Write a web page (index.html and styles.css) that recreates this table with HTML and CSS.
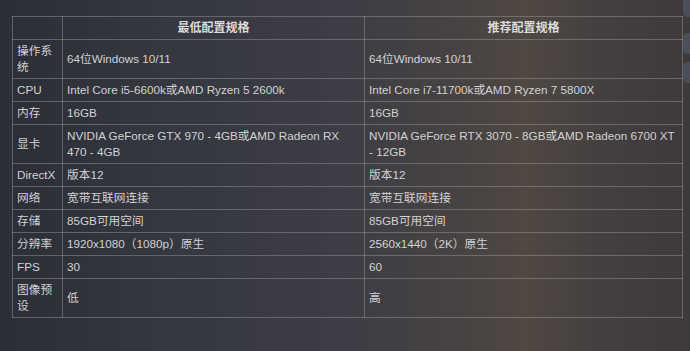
FILE: index.html
```html
<!DOCTYPE html>
<html lang="zh-CN">
<head>
<meta charset="utf-8">
<link rel="stylesheet" href="styles.css">
</head>
<body>
<div class="page">
  <table class="spec">
    <colgroup>
      <col class="c1"><col class="c2"><col class="c3">
    </colgroup>
    <thead>
      <tr><th></th><th>最低配置规格</th><th>推荐配置规格</th></tr>
    </thead>
    <tbody>
      <tr><td>操作系统</td><td>64位Windows 10/11</td><td>64位Windows 10/11</td></tr>
      <tr><td>CPU</td><td>Intel Core i5-6600k或AMD Ryzen 5 2600k</td><td>Intel Core i7-11700k或AMD Ryzen 7 5800X</td></tr>
      <tr><td>内存</td><td>16GB</td><td>16GB</td></tr>
      <tr><td>显卡</td><td>NVIDIA GeForce GTX 970 - 4GB或AMD Radeon RX 470 - 4GB</td><td>NVIDIA GeForce RTX 3070 - 8GB或AMD Radeon 6700 XT - 12GB</td></tr>
      <tr><td>DirectX</td><td>版本12</td><td>版本12</td></tr>
      <tr><td>网络</td><td>宽带互联网连接</td><td>宽带互联网连接</td></tr>
      <tr><td>存储</td><td>85GB可用空间</td><td>85GB可用空间</td></tr>
      <tr><td>分辨率</td><td>1920x1080（1080p）原生</td><td>2560x1440（2K）原生</td></tr>
      <tr><td>FPS</td><td>30</td><td>60</td></tr>
      <tr><td>图像预设</td><td>低</td><td>高</td></tr>
    </tbody>
  </table>
  <div class="tab tab1"></div>
  <div class="tab tab2"></div>
  <div class="tab tab3"></div>
</div>
</body>
</html>
```
FILE: styles.css
```css
html, body {
  margin: 0;
  padding: 0;
  width: 690px;
  height: 351px;
  overflow: hidden;
}
body {
  background: linear-gradient(90deg, #2b2e37 0%, #353741 25%, #3d3d45 50%, #4a4442 70%, #4f4843 76%, #433e3f 88%, #3e3a3b 100%);
  font-family: "Liberation Sans", Arial, "Noto Sans CJK SC", sans-serif;
  color: #d2d2d2;
}
.page {
  position: relative;
  height: 351px;
  padding: 16px 0 0 12px;
  box-sizing: border-box;
}
.spec {
  border-collapse: collapse;
  width: 670px;
  table-layout: fixed;
  font-size: 11.7px;
  line-height: 16px;
}
.c1 { width: 50px; }
.c2 { width: 302px; }
.c3 { width: 318px; }
.spec th, .spec td {
  border: 1px solid rgba(160, 160, 160, 0.45);
  padding: 3px 4px;
  text-align: left;
  vertical-align: middle;
}
.spec th {
  text-align: center;
  font-weight: bold;
  font-size: 12px;
  color: #dcdcdc;
}
.tab {
  position: absolute;
  right: 0;
  width: 7px;
  background: #4b4f5b;
  border-radius: 5px 0 0 5px;
}
.tab1 { top: -6px; height: 23px; }
.tab2 { top: 33px; height: 21px; }
.tab3 { top: 62px; height: 21px; }
```
